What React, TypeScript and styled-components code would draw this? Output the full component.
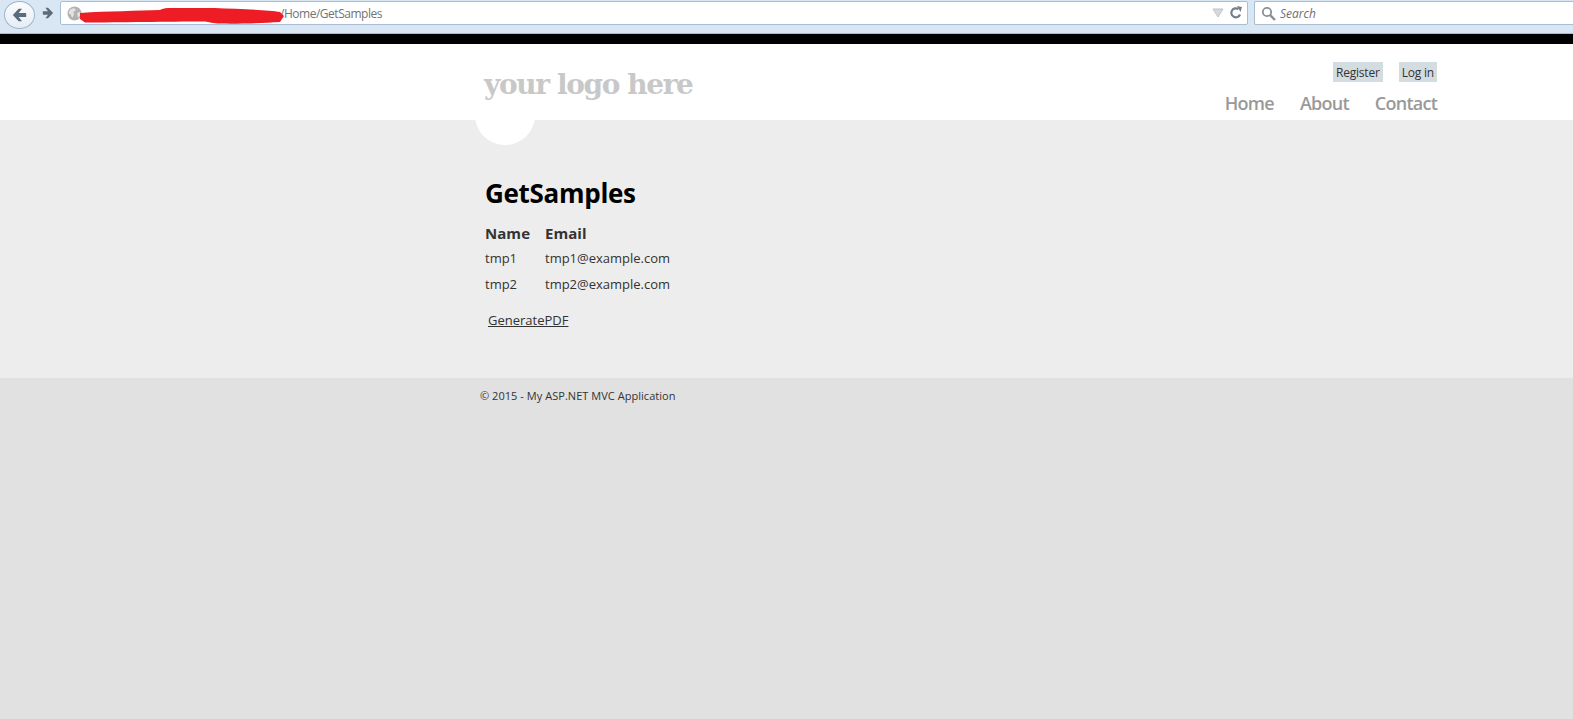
import React from "react";
import styled, { createGlobalStyle } from "styled-components";

const Global = createGlobalStyle`
  html, body { margin: 0; padding: 0; height: 100%; background: #e1e1e1; overflow: hidden; }
  body { font-family: "Open Sans", "Noto Sans", "Liberation Sans", sans-serif; }
  #root { height: 100%; }
`;

const Page = styled.div`
  display: flex;
  flex-direction: column;
  height: 719px;
  overflow: hidden;
`;

const Chrome = styled.div`
  height: 34px;
  box-sizing: border-box;
  background: #d9e7f5;
  border-bottom: 1px solid #a9bacb;
  display: flex;
  align-items: flex-start;
  padding: 1px 0 0 4px;
  flex: none;
`;

const BackButton = styled.div`
  width: 31px;
  height: 28px;
  border-radius: 50%;
  border: 1px solid #a3b5c9;
  background: linear-gradient(#fbfcfe, #e6edf5);
  display: flex;
  align-items: center;
  justify-content: center;
  box-sizing: border-box;
  flex: none;
`;

const ForwardSlot = styled.div`
  width: 25px;
  height: 24px;
  display: flex;
  align-items: center;
  justify-content: center;
  flex: none;
`;

const UrlBar = styled.div`
  position: relative;
  width: 1188px;
  height: 24px;
  box-sizing: border-box;
  background: #fff;
  border: 1px solid #a9bdd3;
  border-radius: 2px;
  display: flex;
  align-items: center;
  padding: 0 4px 0 6px;
  color: #737373;
  flex: none;
`;

const UrlText = styled.span`
  margin-left: 198px;
  flex: 1;
  font-size: 12px;
  letter-spacing: -0.48px;
`;

const Scribble = styled.svg`
  position: absolute;
  left: 17px;
  top: 4px;
`;

const SearchBar = styled.div`
  margin-left: 6px;
  flex: 1;
  height: 24px;
  box-sizing: border-box;
  background: #fff;
  border: 1px solid #a9bdd3;
  border-right: none;
  border-radius: 2px 0 0 2px;
  display: flex;
  align-items: center;
  gap: 4px;
  padding-left: 6px;
  font-size: 12px;
  font-style: italic;
  color: #6f6f6f;
`;

const BlackBar = styled.div`
  height: 10px;
  background: #000;
  flex: none;
`;

const Header = styled.header`
  position: relative;
  height: 76px;
  background: #fff;
  flex: none;
  display: flex;
  justify-content: space-between;
  padding: 0 136px 0 484px;
`;

const Logo = styled.div`
  position: relative;
  z-index: 2;
  font-family: "DejaVu Serif", "Liberation Serif", serif;
  font-weight: 700;
  font-size: 28px;
  letter-spacing: -1.38px;
  color: #c8c8c8;
  line-height: 34px;
  margin-top: 24px;
  white-space: nowrap;
`;

const Circle = styled.div`
  position: absolute;
  left: 475px;
  top: 41px;
  width: 60px;
  height: 60px;
  border-radius: 50%;
  background: #fff;
  z-index: 1;
`;

const HeaderRight = styled.div`
  display: flex;
  flex-direction: column;
  align-items: flex-end;
  padding-top: 18px;
`;

const Account = styled.div`
  display: flex;
  gap: 16px;
`;

const AccountLink = styled.a`
  height: 20px;
  line-height: 21px;
  padding: 0 3px;
  background: #d3dce0;
  font-size: 12px;
  letter-spacing: -0.2px;
  color: #333;
`;

const Nav = styled.nav`
  display: flex;
  gap: 26px;
  margin-top: 9px;
`;

const NavLink = styled.a`
  font-size: 18px;
  font-weight: 600;
  line-height: 24px;
  letter-spacing: -0.75px;
  color: #999;
`;

const Main = styled.main`
  height: 258px;
  box-sizing: border-box;
  background: #ededed;
  flex: none;
  padding: 56px 0 0 485px;
  color: #333;
`;

const Title = styled.h2`
  margin: 0;
  font-size: 26px;
  line-height: 34px;
  font-weight: 700;
  letter-spacing: -0.3px;
  color: #000;
`;

const Samples = styled.div`
  display: grid;
  grid-template-columns: 60px auto;
  justify-content: start;
  margin-top: 11px;
`;

const HeadCell = styled.div`
  font-size: 15px;
  font-weight: 700;
  line-height: 24px;
  letter-spacing: 0.05px;
  color: #333;
`;

const Cell = styled.div`
  font-size: 13px;
  line-height: 26px;
  color: #333;
`;

const PdfLink = styled.a`
  display: inline-block;
  margin: 12px 0 0 3px;
  font-size: 13px;
  line-height: 22px;
  color: #333;
  text-decoration: underline;
`;

const Footer = styled.footer`
  flex: 1;
  background: #e1e1e1;
  padding: 10px 0 0 480px;
  font-size: 11px;
  line-height: 16px;
  letter-spacing: 0.04px;
  color: #333;
`;

const rows = [
  { name: "tmp1", email: "tmp1@example.com" },
  { name: "tmp2", email: "tmp2@example.com" },
];

export default function App() {
  return (
    <Page>
      <Global />
      <Chrome>
        <BackButton>
          <svg width="15" height="14" viewBox="0 0 18 16">
            <path d="M8 .5 1 8l7 7.500h4L8 10.500h9v-5H8l4-5z" fill="#5c6b7a" />
          </svg>
        </BackButton>
        <ForwardSlot>
          <svg width="12" height="12" viewBox="0 0 14 14">
            <path d="M7 1 13 7 7 13H4L7 9H1V5h6L4 1z" fill="#5c6b7a" />
          </svg>
        </ForwardSlot>
        <UrlBar>
          <svg width="15" height="15" viewBox="0 0 15 15">
            <circle cx="7.5" cy="7.5" r="7" fill="#b2b2b2" />
            <path d="M3 3.500 7 2l2 2-2.500 2L7 9l-2 3-1-3-2.500-2zM10 7l3-1 .5 3-2.500 3z" fill="#e2e2e2" />
          </svg>
          <UrlText>/Home/GetSamples</UrlText>
          <Scribble width="208" height="20" viewBox="0 0 208 20">
            <path
              d="M2 7 C30 5 60 5 82 4 C84 3 86 2 90 2 L137 2 C160 3 190 4 202 6 L206 10 L202 16 C185 17 160 18 142 17.500 C136 17.500 130 16 127 15.500 C90 15.500 40 16.500 7 16.500 L2 13 Z"
              fill="#ee1c25"
            />
          </Scribble>
          <svg width="12" height="10" viewBox="0 0 12 10">
            <path d="M1 1h10L6 9z" fill="#d5dade" stroke="#bcc3c9" />
          </svg>
          <svg width="14" height="14" viewBox="0 0 14 14" style={{ marginLeft: 5 }}>
            <path d="M11 8.500A4.500 4.500 0 1 1 9.500 3.200" fill="none" stroke="#737f8a" strokeWidth="2.200" />
            <path d="M8 0l5 1-1.500 5z" fill="#737f8a" />
          </svg>
        </UrlBar>
        <SearchBar>
          <svg width="15" height="15" viewBox="0 0 15 15">
            <circle cx="6" cy="6" r="4.200" fill="none" stroke="#8a8f94" strokeWidth="1.800" />
            <path d="M9.200 9.200 14 14" stroke="#8a8f94" strokeWidth="2.400" />
          </svg>
          Search
        </SearchBar>
      </Chrome>
      <BlackBar />
      <Header>
        <Logo>your logo here</Logo>
        <HeaderRight>
          <Account>
            <AccountLink>Register</AccountLink>
            <AccountLink>Log in</AccountLink>
          </Account>
          <Nav>
            <NavLink>Home</NavLink>
            <NavLink>About</NavLink>
            <NavLink>Contact</NavLink>
          </Nav>
        </HeaderRight>
        <Circle />
      </Header>
      <Main>
        <Title>GetSamples</Title>
        <Samples>
          <HeadCell>Name</HeadCell>
          <HeadCell>Email</HeadCell>
          {rows.map((r) => (
            <React.Fragment key={r.name}>
              <Cell>{r.name}</Cell>
              <Cell>{r.email}</Cell>
            </React.Fragment>
          ))}
        </Samples>
        <PdfLink>GeneratePDF</PdfLink>
      </Main>
      <Footer>© 2015 - My ASP.NET MVC Application</Footer>
    </Page>
  );
}
